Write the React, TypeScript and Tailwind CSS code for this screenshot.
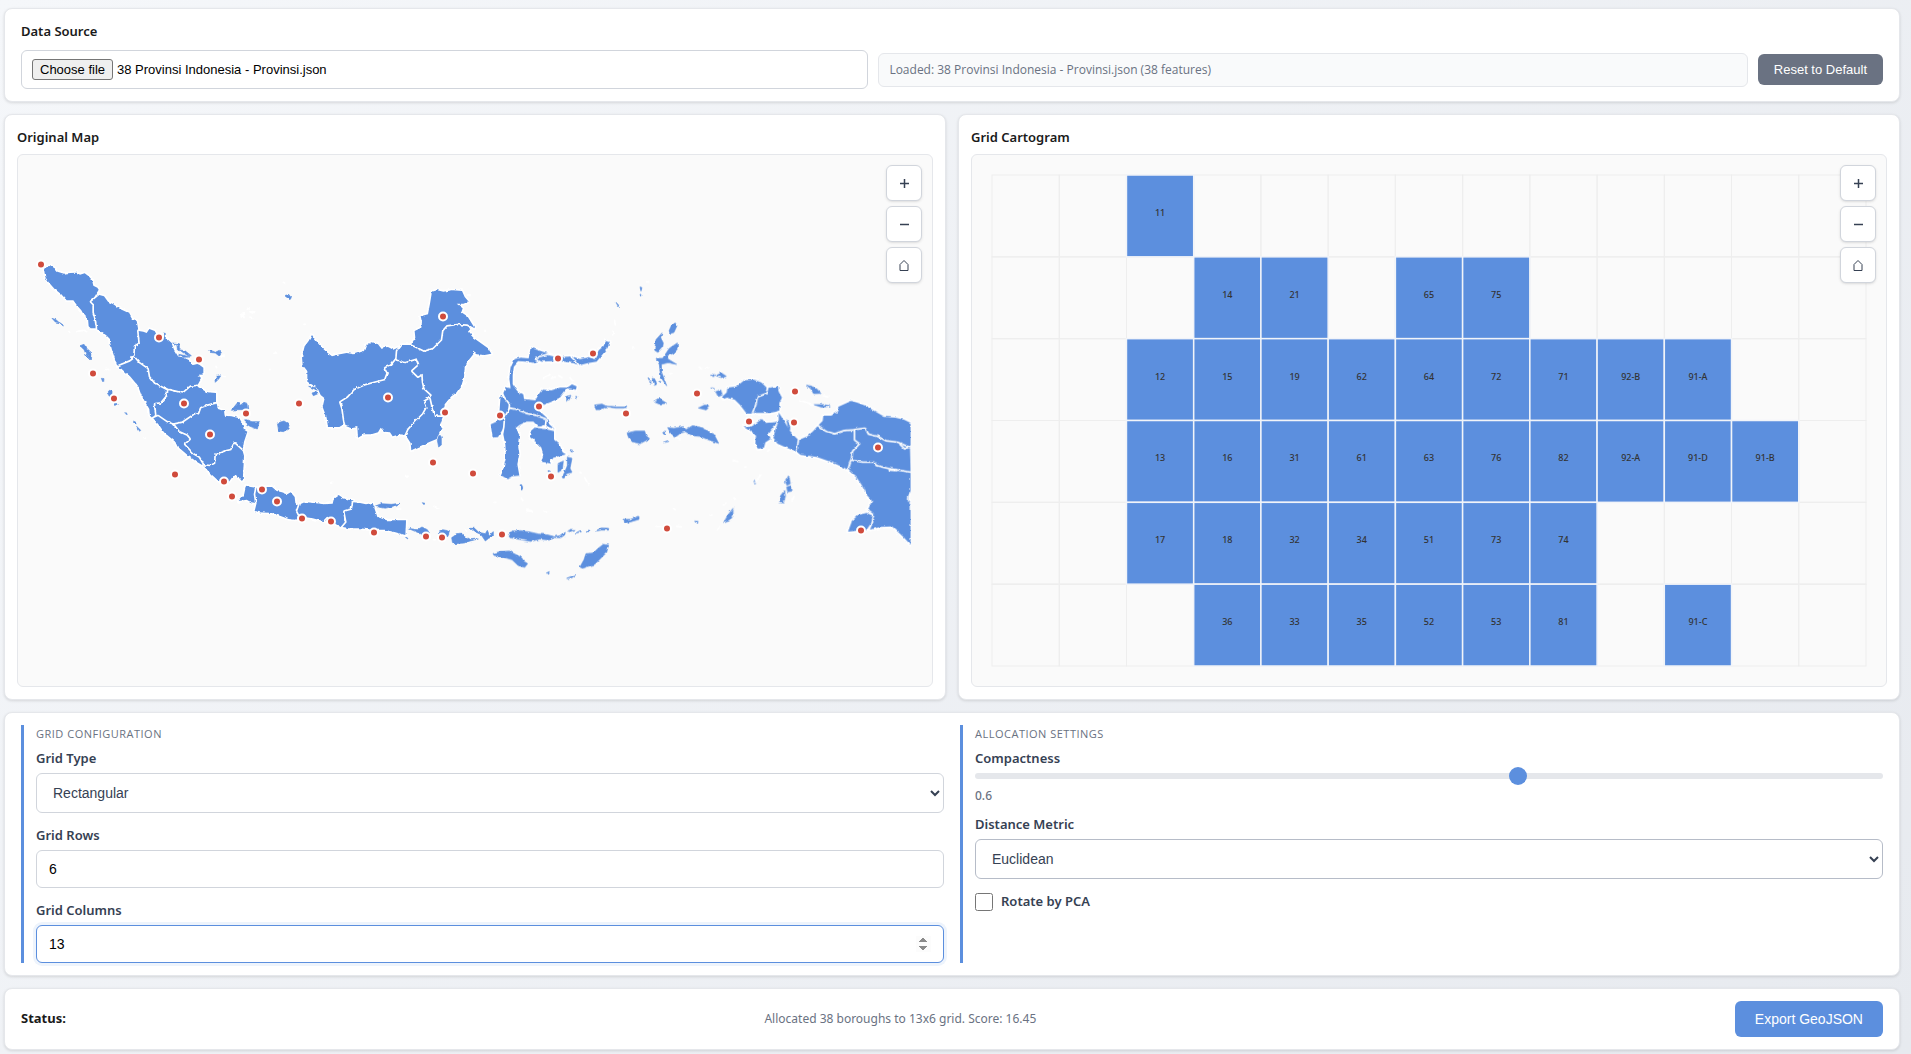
import { ReactNode, useState } from 'react'

const FILE_NAME = '38 Provinsi Indonesia - Provinsi.json'

const VIEW_WIDTH = 914
const VIEW_HEIGHT = 531
const GRID_PADDING = 20

// One row per entry: first column used by each run, then the province codes
const CELL_RUNS: { row: number; start: number; codes: string[] }[] = [
  { row: 0, start: 2, codes: ['11'] },
  { row: 1, start: 3, codes: ['14', '21'] },
  { row: 1, start: 6, codes: ['65', '75'] },
  { row: 2, start: 2, codes: ['12', '15', '19', '62', '64', '72', '71', '92-B', '91-A'] },
  { row: 3, start: 2, codes: ['13', '16', '31', '61', '63', '76', '82', '92-A', '91-D', '91-B'] },
  { row: 4, start: 2, codes: ['17', '18', '32', '34', '51', '73', '74'] },
  { row: 5, start: 3, codes: ['36', '33', '35', '52', '53', '81'] },
  { row: 5, start: 10, codes: ['91-C'] }
]

interface Region {
  name: string
  x: number
  y: number
  provinces: string[]
  islands: string
  islets?: string
}

// Outlines are stored at three times the view scale, relative to each region's corner
const REGIONS: Region[] = [
  {
    name: 'sumatra',
    x: 2,
    y: 85,
    provinces: [
      'M72,84 82,76 92,75 104,82 112,92 132,98 152,96 170,95 180,101 194,97 206,106 216,117 220,134 232,140 236,146 228,160 218,178 222,196 222,220 230,236 230,262 212,262 206,256 204,232 192,222 184,208 172,194 160,178 140,178 124,160 104,144 86,124 76,108Z',
      'M238,162 252,166 264,182 280,190 300,204 326,216 336,234 350,240 354,262 356,290 360,302 344,316 346,338 334,346 332,362 304,368 292,376 284,350 276,326 270,304 270,294 258,282 236,268 232,262 228,236 222,214 222,190 214,182Z',
      'M356,270 370,272 380,276 388,264 404,270 412,284 430,290 436,282 436,292 456,310 462,326 474,346 492,350 508,358 520,372 534,368 550,380 550,396 536,404 544,412 534,430 510,438 488,458 470,450 444,446 420,438 398,424 386,408 384,382 364,376 354,362 344,346 346,316 360,308 358,290Z',
      'M296,376 330,362 344,352 356,366 382,384 386,408 402,428 444,450 440,466 424,486 402,490 406,520 398,532 390,524 388,504 376,484 364,462 354,434 330,406 314,392Z',
      'M446,448 488,458 512,438 530,436 548,446 560,454 588,456 588,484 562,492 540,500 534,524 526,516 508,530 488,546 460,550 440,544 424,532 410,524 406,490 424,488 440,468Z',
      'M590,488 594,504 612,510 614,524 634,526 658,532 666,546 672,566 682,572 672,602 668,626 658,620 644,606 632,626 612,634 590,640 584,670 560,674 546,664 534,648 514,638 502,622 488,610 506,592 498,580 478,574 460,552 488,546 526,520 536,524 544,502 566,494Z',
      'M400,532 414,526 440,544 460,552 476,574 500,584 508,594 490,610 504,624 518,640 536,650 550,674 530,662 500,640 472,616 466,602 432,574 420,556Z',
      'M550,674 572,676 586,668 588,642 616,632 634,628 644,608 668,630 672,644 668,722 658,712 652,700 640,704 624,726 596,720 574,700Z'
    ],
    islands:
      'M634,508 652,486 662,492 672,484 684,488 686,504 668,506 648,506ZM678,536 696,542 718,542 712,564 690,556 678,548ZM180,314 192,310 200,322 216,336 214,358 200,344 192,326ZM96,232l12,4 10,9 -12,-2zM118,244l16,11 -6,-1zM262,456l6,-8 8,2 0,10 8,14 -6,6 -10,-14zM280,486l12,2 -4,6zM315,511l7,9 -4,0zM340,540l8,4 0,6 -6,-2zM350,556l12,12 -3,3zM247,412l5,1 -1,9zM458,306l20,2 0,22 -6,-4 -1,-13zM478,326l18,4 18,14 -10,0 -16,-10zM476,340l20,4 12,4 -18,1zM564,330l14,0 8,4 12,-6 4,10 -6,6 -10,-8 -18,-2zM590,402l14,0 -8,12 -10,10 -1,-7 7,-5zM430,276l6,1 0,10z',
    islets:
      'M170,272l18,-4M192,268l8,4M256,386l12,-1M664,228l6,-6 2,8M682,202l6,2M696,212l8,2M690,228l8,4M606,402l8,6M588,376l2,4M372,590l4,2M146,272l3,2M602,344l10,2'
  },
  {
    name: 'kalimantan',
    x: 212,
    y: 115,
    provinces: [
      'M246,192 254,204 270,224 290,244 306,256 330,250 350,246 372,250 402,240 408,224 424,214 444,220 452,230 474,228 490,236 516,224 502,240 498,262 480,284 464,292 474,304 464,326 440,334 404,342 372,358 354,378 332,392 338,412 340,440 344,458 328,468 294,468 290,440 278,408 284,382 272,372 262,350 232,332 232,300 218,282 216,258 224,226 236,210Z',
      'M500,264 524,272 558,260 568,282 548,298 562,316 576,312 578,334 584,352 604,374 586,388 590,412 576,430 548,460 534,480 528,492 510,490 488,496 480,484 464,482 452,470 444,484 424,490 402,490 384,500 382,468 364,472 346,464 342,440 338,412 332,394 354,380 374,358 404,344 442,334 466,328 474,306 466,292 484,284Z',
      'M502,240 516,222 544,222 560,228 584,238 606,230 628,210 634,182 650,164 680,160 710,158 724,170 714,182 730,200 752,216 774,232 784,248 764,252 740,250 726,240 730,250 712,272 704,288 702,318 694,344 678,366 664,376 644,400 640,426 638,436 612,436 602,404 598,384 606,372 584,352 580,334 578,308 564,316 548,300 568,282 560,262 526,272 500,264Z',
      'M606,62 622,58 640,62 668,58 696,60 704,78 716,92 700,98 680,98 698,112 694,124 712,136 726,158 734,172 712,160 682,158 650,162 636,178 632,206 608,230 582,238 562,228 544,220 556,200 554,180 574,170 576,152 572,136 594,130 600,98Z',
      'M528,494 536,476 556,454 580,430 590,412 584,392 598,384 604,410 612,438 638,438 630,462 636,468 626,488 620,504 600,512 560,530 544,538 542,516Z'
    ],
    islands:
      'M246,366l14,-4 4,6 -14,6zM236,346l22,4 4,8zM164,74l12,-4 8,10 -4,6zM142,456l20,-6 16,10 -4,14 -14,8 -14,-2zM628,490l6,8 0,24 -8,6 -4,-20z',
    islets:
      'M32,134l12,-8M60,122l8,4M132,247l8,-1M118,296h2M160,34l4,2M712,72l8,2M762,178l4,3M700,340l8,-6M528,618l8,-4M302,636h4M222,160h4'
  },
  {
    name: 'java',
    x: 192,
    y: 305,
    provinces: [
      'M86,120 102,102 108,74 122,78 138,80 134,104 138,126 124,124 110,116Z',
      'M136,100 140,80 156,88 170,78 186,78 200,90 216,94 232,100 242,94 254,108 256,126 266,134 258,150 266,162 256,176 236,174 214,166 186,156 150,154 134,150 140,126Z',
      'M270,128 290,124 312,126 342,130 368,128 372,112 386,102 400,112 414,116 430,118 426,144 404,150 402,178 408,186 392,198 372,186 360,180 340,180 308,172 270,166 262,150Z',
      'M430,124 450,126 468,130 488,126 496,150 502,168 530,178 560,178 588,178 586,222 556,214 524,206 490,206 450,202 420,202 398,198 410,184 404,152 426,146Z'
    ],
    islands:
      'M494,136l20,-8 30,2 26,-3 -18,9 -28,6zM594,202l28,4 14,-8 16,8 6,10 -18,9 -18,-11zM684,216l14,-10 20,4 -4,16 -14,6zM725,230l17,-12 12,-2 8,10 18,10 25,-2 -25,6 -14,6 -38,2zM780,202l14,0 12,12 20,4 6,-10 6,14 12,-10 0,14 -14,6 -10,8 -8,-12 -6,-8 -18,-8zM586,228l10,5 -4,0zM637,125l8,2 -3,4zM934,74l3,8 -2,4z',
    islets: 'M672,136l14,6M362,66l4,-2M588,46l4,2M560,144h12M950,148l20,4M766,204l4,6M670,236h6M344,178l8,-8'
  },
  {
    name: 'sulawesi-maluku',
    x: 462,
    y: 115,
    provinces: [
      'M78,348 92,352 88,322 92,290 104,264 120,260 146,262 152,230 166,234 182,240 208,248 190,254 168,264 180,272 164,276 140,272 114,270 102,284 98,312 98,340 112,360 130,370 132,384 166,388 176,370 186,356 214,358 240,350 262,350 276,340 290,346 288,356 262,352 250,366 240,380 216,392 190,402 172,414 200,440 208,460 224,474 200,466 176,440 140,430 112,418 92,410 80,390 70,366Z',
      'M168,262 204,252 230,258 250,258 272,256 290,270 296,282 280,276 252,272 220,270 184,272Z',
      'M276,256 300,264 326,258 344,264 356,238 370,226 378,210 390,214 382,232 366,252 350,272 324,276 300,282 290,270Z',
      'M62,372 72,382 86,400 84,420 76,440 78,460 64,482 54,498 38,500 32,460 50,452 58,430 60,400Z',
      'M90,414 112,418 140,430 170,436 196,446 194,462 176,468 160,452 140,452 118,462 106,472 118,488 114,520 118,548 112,580 118,614 96,616 82,624 62,612 70,594 78,560 76,520 70,490 74,468 76,440Z',
      'M164,470 196,474 222,480 222,506 238,520 248,544 258,550 236,556 214,562 212,578 184,572 190,550 184,530 166,512 150,498 152,480Z'
    ],
    islands:
      'M234,578l16,-8 -3,26 -13,8zM262,558l14,4 -6,30 6,12 -16,4 -8,14 -6,-3 8,-15 8,-20zM270,536l8,2 -4,5zM260,376l13,-3 -5,13 -8,2zM287,376l7,2 -4,5zM204,598l6,2 -3,5zM524,238l4,-32 18,-20 -4,14 8,16 -2,12 -14,16zM567,180l7,-16 12,-8 5,8 -9,20 -8,3zM528,262l20,0 8,-12 12,-18 24,-16 0,18 -10,12 -20,8 2,10 26,16 -26,-5 -20,5 1,24 15,40 -18,-26 -4,-38zM504,320l6,5 -3,2zM516,322l10,2 4,16 -6,3zM508,332l6,1 -2,4zM536,330l7,2 -3,4zM520,392l16,-10 10,6 14,9 -22,2zM344,402l22,-3 14,7 -16,10 -16,0zM378,406l20,0 12,2 30,0 0,3 -34,0zM441,486l25,-6 28,0 4,14 11,9 -29,15 -24,-6 -10,-12zM563,470l19,2 28,-5 8,9 20,-12 28,6 36,20 14,27 -26,-9 -30,-12 -22,-2 -22,-12 -14,4 -16,12 -14,-12zM548,486l6,-6 0,12zM550,514l14,-5 -2,3zM87,796l9,-16 26,-1 28,4 26,6 24,2 20,5 -12,11 -28,-3 -28,7 -32,-6 -30,-5zM214,799l28,-5 14,-10 -2,8 -12,8zM262,779l10,-4 14,1 -16,6zM288,786l14,-8 2,4zM318,783l9,-4 -2,6zM346,780l18,-9 22,1 0,5 -22,0zM432,745l20,0 25,-9 0,9 -27,8 -16,3zM39,848l21,-6 28,-2 14,8 22,11 8,12 11,7 -9,11 -20,-6 -18,-17 -26,-8 -28,-5zM300,888l12,-22 6,-18 22,-2 12,-12 18,-14 16,2 -6,22 -18,18 -18,18 -20,6 -16,6zM260,922l14,-6 14,-5 -12,9zM199,906l9,-4 -2,5zM480,48l6,2 -3,10zM480,70l3,0 -1,6zM408,94l8,8 -1,5zM124,640l4,8 -3,10z',
    islets:
      'M190,320l20,-10M214,322l12,-4M236,314l10,6M270,320l8,10M140,714l20,8M130,690l-6,-8M404,148l2,14M400,178l-2,14M300,604l4,2M314,620l12,22M192,720h8M44,694h4M580,712l6,4M530,766h14M590,766l14,2M590,502l10,4M458,228l6,2M500,32l6,1M570,308h6'
  },
  {
    name: 'papua',
    x: 672,
    y: 115,
    provinces: [
      'M96,378 110,364 112,350 140,346 162,328 190,326 214,334 230,350 228,368 204,378 196,402 188,428 170,428 150,402 134,386 112,380 100,384Z',
      'M236,350 264,346 266,362 276,380 268,396 268,420 240,426 190,426 200,402 204,380 230,370Z',
      'M158,464 178,468 196,458 216,444 226,456 250,454 266,450 248,472 234,492 242,504 226,514 222,530 204,534 196,516 198,494 180,478Z',
      'M266,424 276,440 292,466 300,480 318,500 328,508 322,544 304,536 284,528 262,518 250,500 256,476 266,450Z',
      'M328,506 352,496 370,480 386,462 402,478 432,490 462,478 492,478 496,506 512,518 490,540 486,570 474,596 440,580 414,570 380,558 332,552 322,544Z',
      'M400,434 424,434 446,420 444,408 484,390 500,394 526,404 550,418 584,438 616,440 642,446 662,456 662,534 640,524 622,514 588,510 560,498 538,488 526,474 500,474 462,476 434,486 408,478 386,462 398,450Z',
      'M496,478 524,474 534,492 560,498 588,512 622,516 660,532 662,606 630,600 600,594 560,586 550,574 516,576 486,568 490,542 512,518 496,506Z',
      'M484,570 516,576 550,576 558,586 600,596 662,606 662,660 654,676 654,692 662,702 662,822 640,798 606,766 570,768 540,776 556,734 534,716 546,690 530,672 514,640 500,620 476,598Z',
      'M474,782 486,750 504,732 530,726 548,734 544,756 530,776Z'
    ],
    islands:
      'M349,342l20,6 10,4 14,15 -22,1 -8,-14zM372,401l30,0 18,4 -24,4zM62,309l12,3 -4,6zM78,314l16,-8 15,10 -15,4zM66,350l8,4 -4,1zM77,362l15,-5 5,15 -12,5zM25,411l19,-9 15,3 -10,12zM286,632l10,-18 5,24 -10,5zM290,648l14,-4 2,16 -13,3zM270,676l14,-18 2,18 -6,20 -11,-1zM192,630l6,2 -3,8zM101,755l13,-23 15,-20 0,22 -11,16zM14,750l10,1 -3,8zM290,446l8,12 2,18 -4,2z',
    islets:
      'M196,634l16,-22M100,702l8,-6M128,684h8M306,690l6,-14M330,388l30,10M400,374l14,4M630,520l14,14 14,-6M598,597l20,2M28,288l6,6M46,294l8,-4M232,542l6,-6M82,776l8,-6M360,402h10M130,568l14,4M164,588h4M60,732h6'
  }
]

const CENTROIDS: [number, number][] = [
  [23, 109], [141, 182], [181, 204], [75, 218], [96, 243], [166, 248], [192, 279], [228, 258],
  [157, 319], [206, 326], [214, 341], [425, 161], [281, 248], [370, 242], [427, 257], [415, 307],
  [455, 318], [244, 334], [259, 346], [284, 363], [313, 366], [356, 377], [408, 381], [424, 382],
  [484, 379], [540, 203], [575, 198], [521, 251], [482, 260], [608, 258], [533, 321], [649, 373],
  [679, 238], [777, 236], [731, 266], [776, 267], [860, 292], [843, 375]
]

function ProvinceMap() {
  return (
    <svg viewBox={`0 0 ${VIEW_WIDTH} ${VIEW_HEIGHT}`} className="block w-full" role="img" aria-label="Original map">
      <defs>
        <filter id="coast" x="0" y="0" width={VIEW_WIDTH} height={VIEW_HEIGHT} filterUnits="userSpaceOnUse" colorInterpolationFilters="sRGB">
          <feTurbulence type="fractalNoise" baseFrequency="0.22" numOctaves="2" seed="4" />
          <feDisplacementMap in="SourceGraphic" scale="3" xChannelSelector="R" yChannelSelector="G" />
        </filter>
        <clipPath id="extent">
          <rect x="0" y="0" width="892.6" height={VIEW_HEIGHT} />
        </clipPath>
      </defs>
      <g clipPath="url(#extent)">
        <g filter="url(#coast)">
          {REGIONS.map((region) => (
            <g key={region.name} transform={`translate(${region.x} ${region.y + 1}) scale(0.33333)`}>
              <g fill="#5c8fde" stroke="#ffffff" strokeWidth="10" strokeLinejoin="round" paintOrder="stroke">
                {region.provinces.map((d) => (
                  <path key={d} d={d} />
                ))}
              </g>
              <path d={region.islands} fill="#5c8fde" stroke="#5c8fde" strokeWidth="2" />
              <path d={region.islets} fill="none" stroke="#ffffff" strokeWidth="5" strokeLinecap="round" />
            </g>
          ))}
        </g>
      </g>
      {CENTROIDS.map(([x, y]) => (
        <circle key={`${x}-${y}`} cx={x} cy={y + 0.5} r="4" fill="#d04b3c" stroke="#ffffff" strokeWidth="2" />
      ))}
    </svg>
  )
}

function Cartogram({ rows, columns }: { rows: number; columns: number }) {
  const cellWidth = (VIEW_WIDTH - GRID_PADDING * 2) / columns
  const cellHeight = (VIEW_HEIGHT - GRID_PADDING * 2) / rows
  const left = (col: number) => GRID_PADDING + col * cellWidth
  const top = (row: number) => GRID_PADDING + row * cellHeight

  return (
    <svg viewBox={`0 0 ${VIEW_WIDTH} ${VIEW_HEIGHT}`} className="block w-full" role="img" aria-label="Grid cartogram">
      {Array.from({ length: rows * columns }, (_, i) => (
        <rect
          key={i}
          x={left(i % columns)}
          y={top(Math.floor(i / columns))}
          width={cellWidth}
          height={cellHeight}
          fill="none"
          stroke="#eeeeee"
        />
      ))}
      {CELL_RUNS.map(({ row, start, codes }) =>
        codes.map((code, i) => (
          <g key={code}>
            <rect
              x={left(start + i)}
              y={top(row)}
              width={cellWidth}
              height={cellHeight}
              fill="#5c8fde"
              stroke="#f1f4f9"
              strokeWidth="1.5"
            />
            <text
              x={left(start + i) + cellWidth / 2}
              y={top(row) + cellHeight / 2}
              textAnchor="middle"
              className="fill-[#333333] text-[9px] font-medium"
            >
              {code}
            </text>
          </g>
        ))
      )}
    </svg>
  )
}

function Card({ className, children }: { className: string; children: ReactNode }) {
  return (
    <section className={`rounded-lg border border-gray-200 bg-white py-3 shadow-[0_1px_3px_rgba(0,0,0,0.12)] ${className}`}>
      {children}
    </section>
  )
}

function MapPanel({ title, children }: { title: string; children: ReactNode }) {
  const buttonClass =
    'flex h-9 w-9 items-center justify-center rounded-md border border-gray-300 bg-white text-gray-700 shadow-sm'

  return (
    <Card className="min-w-0 flex-1 px-3">
      <h2 className="mb-1.5 text-[13px] leading-[21px] font-semibold">{title}</h2>
      <div className="relative rounded-md border border-gray-200 bg-[#fafafa]">
        {children}
        <div className="absolute top-2.5 right-2.5 flex flex-col gap-[5px]">
          <button className={buttonClass} aria-label="Zoom in">
            <svg width="9" height="9" viewBox="0 0 9 9" stroke="currentColor" strokeWidth="1.5">
              <path d="M4.5 0V9M0 4.5H9" />
            </svg>
          </button>
          <button className={buttonClass} aria-label="Zoom out">
            <svg width="9" height="9" viewBox="0 0 9 9" stroke="currentColor" strokeWidth="1.5">
              <path d="M0 4.5H9" />
            </svg>
          </button>
          <button className={buttonClass} aria-label="Reset view">
            <svg width="10" height="12" viewBox="0 0 10 12" fill="none" stroke="currentColor">
              <path d="M1 11.5V5.5L5 1.5L9 5.5V11.5Z" />
            </svg>
          </button>
        </div>
      </div>
    </Card>
  )
}

function SettingsGroup({ title, children }: { title: string; children: ReactNode }) {
  return (
    <fieldset className="min-w-0 flex-1 border-l-3 border-[#5c8fde] pl-3">
      <h3 className="mb-1.5 font-['Open_Sans',sans-serif] text-[11px] leading-[17px] font-medium tracking-[0.5px] text-gray-500 uppercase">
        {title}
      </h3>
      {children}
    </fieldset>
  )
}

const labelClass = 'mb-1 block text-[13px] leading-[21px] font-semibold text-gray-700'
const fieldClass =
  "block w-full rounded-md border border-gray-300 bg-white px-3 font-['Liberation_Sans',Arial,sans-serif] text-[14px] outline-none"

export default function App() {
  const [fileName, setFileName] = useState(FILE_NAME)
  const [gridType, setGridType] = useState('rectangular')
  const [rows, setRows] = useState(6)
  const [columns, setColumns] = useState(13)
  const [compactness, setCompactness] = useState(0.6)
  const [metric, setMetric] = useState('euclidean')
  const [rotate, setRotate] = useState(false)

  return (
    <div className="flex min-h-screen flex-col gap-3 bg-linear-135 from-[#f5f7fa] to-[#e7eaef] pt-2 pr-[11px] pb-[5px] pl-1 font-['Noto_Sans',sans-serif] text-[13px] text-[#1a1a1a]">
      <Card className="px-4">
        <label htmlFor="data-file" className="mb-2 block leading-[21px] font-semibold">
          Data Source
        </label>
        <div className="flex items-center gap-2.5">
          <div className="relative flex h-[39px] min-w-0 flex-[1_1_0px] items-center rounded-md border border-gray-300 bg-white px-2.5 font-['Liberation_Sans',Arial,sans-serif] text-[13px] text-black">
            <span className="mr-1 rounded-[3px] border border-[#767676] bg-[#efefef] px-[7px] leading-[19px]">
              Choose file
            </span>
            <span>{fileName}</span>
            <input
              id="data-file"
              type="file"
              accept=".json,.geojson"
              onChange={(e) => setFileName(e.target.files?.[0]?.name ?? FILE_NAME)}
              className="absolute inset-0 cursor-pointer opacity-0"
            />
          </div>
          <div className="flex h-[34px] min-w-0 flex-[1_1_44px] items-center rounded-md border border-gray-200 bg-gray-50 px-2.5 font-['Open_Sans',sans-serif] text-[12px] font-medium text-gray-500">
            Loaded: {fileName} (38 features)
          </div>
          <button
            onClick={() => setFileName(FILE_NAME)}
            className="h-[31px] rounded-md bg-gray-500 px-4 font-['Liberation_Sans',Arial,sans-serif] text-[13px] text-white"
          >
            Reset to Default
          </button>
        </div>
      </Card>

      <div className="flex gap-3">
        <MapPanel title="Original Map">
          <ProvinceMap />
        </MapPanel>
        <MapPanel title="Grid Cartogram">
          <Cartogram rows={rows} columns={columns} />
        </MapPanel>
      </div>

      <Card className="flex gap-4 px-4">
        <SettingsGroup title="Grid Configuration">
          <label htmlFor="grid-type" className={labelClass}>
            Grid Type
          </label>
          <select
            id="grid-type"
            value={gridType}
            onChange={(e) => setGridType(e.target.value)}
            className={`${fieldClass} mb-3 h-10 text-gray-700`}
          >
            <option value="rectangular">Rectangular</option>
            <option value="hexagonal">Hexagonal</option>
          </select>
          <label htmlFor="grid-rows" className={labelClass}>
            Grid Rows
          </label>
          <input
            id="grid-rows"
            type="number"
            min={1}
            value={rows}
            onChange={(e) => setRows(Math.max(1, Number(e.target.value)))}
            className={`${fieldClass} mb-3 h-[38px] text-black`}
          />
          <label htmlFor="grid-columns" className={labelClass}>
            Grid Columns
          </label>
          <input
            id="grid-columns"
            type="number"
            min={1}
            value={columns}
            onChange={(e) => setColumns(Math.max(1, Number(e.target.value)))}
            className="block h-[38px] w-full rounded-md border border-[#5c8fde] bg-white px-3 font-['Liberation_Sans',Arial,sans-serif] text-[14px] text-black shadow-[0_0_0_3px_rgba(92,143,222,0.1)] outline-none [&::-webkit-inner-spin-button]:opacity-100"
          />
        </SettingsGroup>

        <SettingsGroup title="Allocation Settings">
          <label htmlFor="compactness" className={labelClass}>
            Compactness
          </label>
          <input
            id="compactness"
            type="range"
            min={0}
            max={1}
            step={0.1}
            value={compactness}
            onChange={(e) => setCompactness(Number(e.target.value))}
            className="mb-2 block h-1.5 w-full appearance-none rounded-full bg-gray-200 outline-none [&::-webkit-slider-thumb]:h-[18px] [&::-webkit-slider-thumb]:w-[18px] [&::-webkit-slider-thumb]:appearance-none [&::-webkit-slider-thumb]:rounded-full [&::-webkit-slider-thumb]:bg-[#5c8fde]"
          />
          <output htmlFor="compactness" className="mb-2.5 block text-[12px] leading-[17px] font-medium text-gray-500">
            {compactness}
          </output>
          <label htmlFor="metric" className={labelClass}>
            Distance Metric
          </label>
          <select
            id="metric"
            value={metric}
            onChange={(e) => setMetric(e.target.value)}
            className="mb-3 block h-10 w-full rounded-md border border-[#b6bcc8] bg-white px-3 font-['Liberation_Sans',Arial,sans-serif] text-[14px] text-gray-700 outline-none"
          >
            <option value="euclidean">Euclidean</option>
            <option value="manhattan">Manhattan</option>
          </select>
          <label className="flex items-center gap-2 text-[13px] leading-[21px] font-semibold text-gray-700">
            <input
              type="checkbox"
              checked={rotate}
              onChange={(e) => setRotate(e.target.checked)}
              className="h-[18px] w-[18px]"
            />
            Rotate by PCA
          </label>
        </SettingsGroup>
      </Card>

      <Card className="flex items-center justify-between px-4">
        <strong className="font-bold">Status:</strong>
        <span className="text-[12px] text-gray-500">
          Allocated 38 boroughs to {columns}x{rows} grid. Score: 16.45
        </span>
        <button className="h-9 rounded-md bg-[#5c8fde] px-5 font-['Liberation_Sans',Arial,sans-serif] text-[14px] text-white">
          Export GeoJSON
        </button>
      </Card>
    </div>
  )
}
